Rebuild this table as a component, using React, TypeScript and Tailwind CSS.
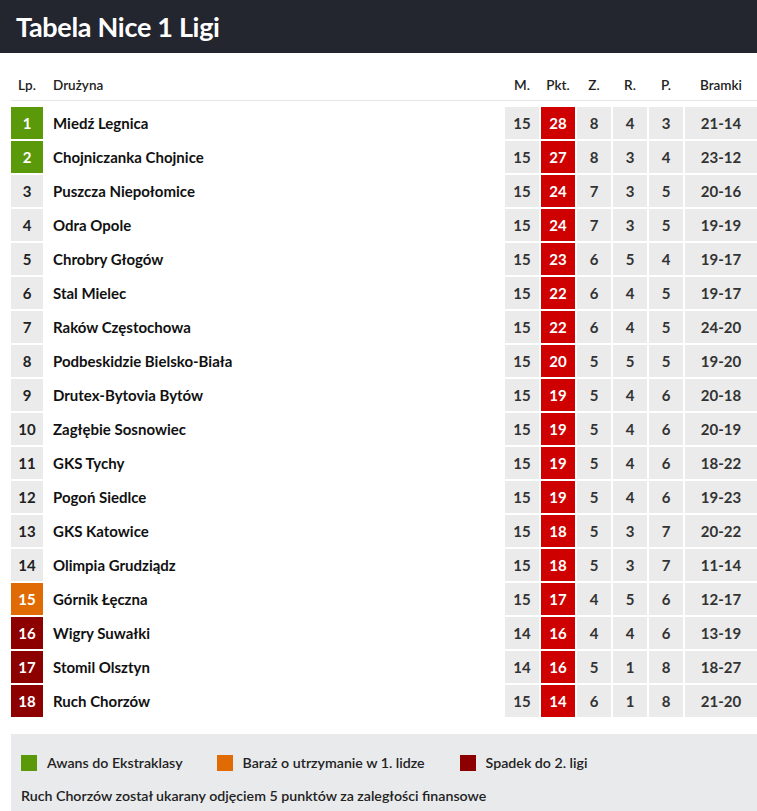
import React from "react";

type Row = [number, string, number, number, number, number, number, string];

const rows: Row[] = [
  [1, "Miedź Legnica", 15, 28, 8, 4, 3, "21-14"],
  [2, "Chojniczanka Chojnice", 15, 27, 8, 3, 4, "23-12"],
  [3, "Puszcza Niepołomice", 15, 24, 7, 3, 5, "20-16"],
  [4, "Odra Opole", 15, 24, 7, 3, 5, "19-19"],
  [5, "Chrobry Głogów", 15, 23, 6, 5, 4, "19-17"],
  [6, "Stal Mielec", 15, 22, 6, 4, 5, "19-17"],
  [7, "Raków Częstochowa", 15, 22, 6, 4, 5, "24-20"],
  [8, "Podbeskidzie Bielsko-Biała", 15, 20, 5, 5, 5, "19-20"],
  [9, "Drutex-Bytovia Bytów", 15, 19, 5, 4, 6, "20-18"],
  [10, "Zagłębie Sosnowiec", 15, 19, 5, 4, 6, "20-19"],
  [11, "GKS Tychy", 15, 19, 5, 4, 6, "18-22"],
  [12, "Pogoń Siedlce", 15, 19, 5, 4, 6, "19-23"],
  [13, "GKS Katowice", 15, 18, 5, 3, 7, "20-22"],
  [14, "Olimpia Grudziądz", 15, 18, 5, 3, 7, "11-14"],
  [15, "Górnik Łęczna", 15, 17, 4, 5, 6, "12-17"],
  [16, "Wigry Suwałki", 14, 16, 4, 4, 6, "13-19"],
  [17, "Stomil Olsztyn", 14, 16, 5, 1, 8, "18-27"],
  [18, "Ruch Chorzów", 15, 14, 6, 1, 8, "21-20"],
];

function lpClass(n: number) {
  if (n <= 2) return "bg-[#5a9a0a] text-white";
  if (n === 15) return "bg-[#e06b05] text-white";
  if (n >= 16) return "bg-[#8c0000] text-white";
  return "bg-[#ebebeb] text-[#222]";
}

const grid =
  "grid grid-cols-[32px_1fr_34px_34px_34px_34px_34px_72px] gap-x-[2px]";

export default function App() {
  return (
    <div
      className="w-[757px] h-[811px] overflow-hidden bg-white text-[#222]"
      style={{ fontFamily: "Lato, 'Open Sans', sans-serif" }}
    >
      <div className="h-[53px] bg-[#23252f] flex items-center pl-[16px]">
        <h1 className="text-white text-[27px] font-bold tracking-[-0.3px] leading-none">
          Tabela Nice 1 Ligi
        </h1>
      </div>
      <div className="pl-[11px] pt-[17px]">
        <div
          className={`${grid} h-[31px] items-center border-b border-[#e6e6e6] text-[13.5px] font-semibold text-[#222]`}
        >
          <div className="text-center">Lp.</div>
          <div className="pl-[8px]">Drużyna</div>
          <div className="text-center">M.</div>
          <div className="text-center">Pkt.</div>
          <div className="text-center">Z.</div>
          <div className="text-center">R.</div>
          <div className="text-center">P.</div>
          <div className="text-center">Bramki</div>
        </div>
        <div className="mt-[6px] flex flex-col gap-y-[2px]">
          {rows.map((r) => (
            <div
              key={r[0]}
              className={`${grid} h-[32px] text-[15px] font-bold`}
            >
              <div
                className={`flex items-center justify-center ${lpClass(r[0])}`}
              >
                {r[0]}
              </div>
              <div className="flex items-center pl-[8px] text-[15px] text-[#111]">
                {r[1]}
              </div>
              <div className="flex items-center justify-center bg-[#ebebeb] text-[#333]">
                {r[2]}
              </div>
              <div className="flex items-center justify-center bg-[#cf0000] text-white">
                {r[3]}
              </div>
              <div className="flex items-center justify-center bg-[#ebebeb] text-[#333]">
                {r[4]}
              </div>
              <div className="flex items-center justify-center bg-[#ebebeb] text-[#333]">
                {r[5]}
              </div>
              <div className="flex items-center justify-center bg-[#ebebeb] text-[#333]">
                {r[6]}
              </div>
              <div className="flex items-center justify-center bg-[#ebebeb] text-[#333]">
                {r[7]}
              </div>
            </div>
          ))}
        </div>
        <div className="mt-[17px] bg-[#e9eaec] pl-[10px] pt-[21px] pb-[20px] text-[14.2px] font-semibold text-[#222]">
          <div className="flex items-center h-[16px]">
            <div className="flex items-center gap-[10px]">
              <span className="w-[16px] h-[16px] bg-[#5a9a0a]" />
              <span>Awans do Ekstraklasy</span>
            </div>
            <div className="flex items-center gap-[10px] ml-[34px]">
              <span className="w-[16px] h-[16px] bg-[#e06b05]" />
              <span>Baraż o utrzymanie w 1. lidze</span>
            </div>
            <div className="flex items-center gap-[10px] ml-[35px]">
              <span className="w-[16px] h-[16px] bg-[#8c0000]" />
              <span>Spadek do 2. ligi</span>
            </div>
          </div>
          <div className="mt-[17px] leading-[16px]">
            Ruch Chorzów został ukarany odjęciem 5 punktów za zaległości finansowe
          </div>
        </div>
      </div>
    </div>
  );
}
